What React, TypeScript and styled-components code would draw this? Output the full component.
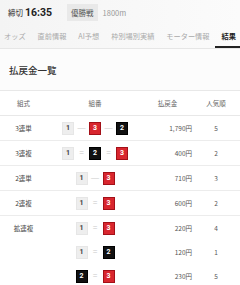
import React from "react";
import styled, { createGlobalStyle } from "styled-components";

const Global = createGlobalStyle`
  html, body { margin: 0; padding: 0; background: #fff; }
  body { font-family: "Noto Sans CJK JP", "Noto Sans", sans-serif; color: #333; width: 240px; overflow: hidden; }
`;

const Page = styled.div`
  width: 240px;
  height: 285px;
  overflow: hidden;
  background: #fff;
`;

const TopArea = styled.div`
  background: linear-gradient(to right, #f4f4f4, #fbfbfb);
  border-bottom: 1px solid #e6e6e6;
`;

const InfoBar = styled.div`
  display: flex;
  align-items: center;
  height: 25px;
  padding: 0 8px;
  box-sizing: border-box;
`;

const Deadline = styled.span`
  font-size: 7.5px;
  color: #333;
  margin-right: 2px;
`;

const Time = styled.span`
  font-size: 10.5px;
  font-weight: 700;
  color: #222;
  margin-right: 15px;
  font-family: "Roboto", "Noto Sans", sans-serif;
`;

const Badge = styled.span`
  background: #e9e9e9;
  color: #555;
  font-size: 7.5px;
  padding: 0 4px;
  height: 17px;
  display: flex;
  align-items: center;
  margin-right: 5px;
`;

const Distance = styled.span`
  font-size: 7.5px;
  color: #999;
`;

const Tabs = styled.div`
  display: flex;
  height: 23px;
  margin-left: -2px;
`;

const Tab = styled.div<{ $active?: boolean }>`
  padding: 0 6px;
  font-size: 7.2px;
  display: flex;
  align-items: center;
  white-space: nowrap;
  color: ${(p) => (p.$active ? "#222" : "#aaa")};
  font-weight: ${(p) => (p.$active ? 700 : 400)};
  border-bottom: 2px solid ${(p) => (p.$active ? "#222" : "transparent")};
  box-sizing: border-box;
`;

const TitleArea = styled.div`
  height: 41px;
  display: flex;
  align-items: center;
  padding-left: 9px;
  border-bottom: 1px solid #e8e8e8;
  background: #fcfcfc;
`;

const Title = styled.h2`
  margin: 0;
  font-size: 9.5px;
  font-weight: 500;
  color: #333;
`;

const Grid = styled.div`
  display: grid;
  grid-template-columns: 47px 96px 49px 48px;
`;

const HeadRow = styled(Grid)`
  height: 24px;
  align-items: center;
  border-bottom: 1px solid #e8e8e8;
`;

const HeadCell = styled.div`
  font-size: 6.5px;
  color: #666;
  text-align: center;
`;

const Row = styled.div<{ $last?: boolean }>`
  border-bottom: ${(p) => (p.$last ? "none" : "1px solid #ececec")};
`;

const Line = styled(Grid)`
  height: 24px;
  align-items: center;
`;

const Kind = styled.div`
  font-size: 6.5px;
  color: #444;
  text-align: center;
`;

const Combo = styled.div`
  display: flex;
  align-items: center;
  justify-content: center;
  gap: 4px;
`;

const boxColors = {
  1: { bg: "#eeeeee", fg: "#444", bd: "#e6e6e6" },
  2: { bg: "#111", fg: "#fff", bd: "#000" },
  3: { bg: "#d8262e", fg: "#fff", bd: "#a31018" },
} as const;

const Box = styled.span<{ $n: 1 | 2 | 3 }>`
  width: 12px;
  height: 13px;
  box-sizing: border-box;
  display: flex;
  align-items: center;
  justify-content: center;
  font-size: 7px;
  font-weight: 700;
  font-family: "Roboto", "Noto Sans", sans-serif;
  background: ${(p) => boxColors[p.$n].bg};
  color: ${(p) => boxColors[p.$n].fg};
  border: 1px solid ${(p) => boxColors[p.$n].bd};
`;

const Sep = styled.span`
  font-size: 8px;
  line-height: 1;
  color: #c8c8c8;
  width: 7px;
  display: flex;
  justify-content: center;
  font-family: "Liberation Sans", "DejaVu Sans", sans-serif;
`;

const Amount = styled.div`
  font-size: 6.5px;
  color: #555;
  text-align: right;
`;

const Rank = styled.div`
  font-size: 6.5px;
  color: #555;
  text-align: center;
`;

type Entry = { combo: (1 | 2 | 3)[]; amount: string; rank: string };
type Bet = { kind: string; sep: string; entries: Entry[] };

const bets: Bet[] = [
  { kind: "3連単", sep: "—", entries: [{ combo: [1, 3, 2], amount: "1,790円", rank: "5" }] },
  { kind: "3連複", sep: "=", entries: [{ combo: [1, 2, 3], amount: "400円", rank: "2" }] },
  { kind: "2連単", sep: "—", entries: [{ combo: [1, 3], amount: "710円", rank: "3" }] },
  { kind: "2連複", sep: "=", entries: [{ combo: [1, 3], amount: "600円", rank: "2" }] },
  {
    kind: "拡連複",
    sep: "=",
    entries: [
      { combo: [1, 3], amount: "220円", rank: "4" },
      { combo: [1, 2], amount: "120円", rank: "1" },
      { combo: [2, 3], amount: "230円", rank: "5" },
    ],
  },
];

const tabs = ["オッズ", "直前情報", "AI予想", "枠別場別実績", "モーター情報", "結果"];

export default function App() {
  return (
    <Page>
      <Global />
      <TopArea>
        <InfoBar>
          <Deadline>締切</Deadline>
          <Time>16:35</Time>
          <Badge>優勝戦</Badge>
          <Distance>1800m</Distance>
        </InfoBar>
        <Tabs>
          {tabs.map((t) => (
            <Tab key={t} $active={t === "結果"}>
              {t}
            </Tab>
          ))}
        </Tabs>
      </TopArea>
      <TitleArea>
        <Title>払戻金一覧</Title>
      </TitleArea>
      <HeadRow>
        <HeadCell>組式</HeadCell>
        <HeadCell>組番</HeadCell>
        <HeadCell>払戻金</HeadCell>
        <HeadCell>人気順</HeadCell>
      </HeadRow>
      {bets.map((b, bi) => (
        <Row key={b.kind} $last={bi === bets.length - 1}>
          {b.entries.map((e, ei) => (
            <Line key={ei}>
              <Kind>{ei === 0 ? b.kind : ""}</Kind>
              <Combo>
                {e.combo.map((n, i) => (
                  <React.Fragment key={i}>
                    {i > 0 && <Sep>{b.sep}</Sep>}
                    <Box $n={n}>{n}</Box>
                  </React.Fragment>
                ))}
              </Combo>
              <Amount>{e.amount}</Amount>
              <Rank>{e.rank}</Rank>
            </Line>
          ))}
        </Row>
      ))}
    </Page>
  );
}
